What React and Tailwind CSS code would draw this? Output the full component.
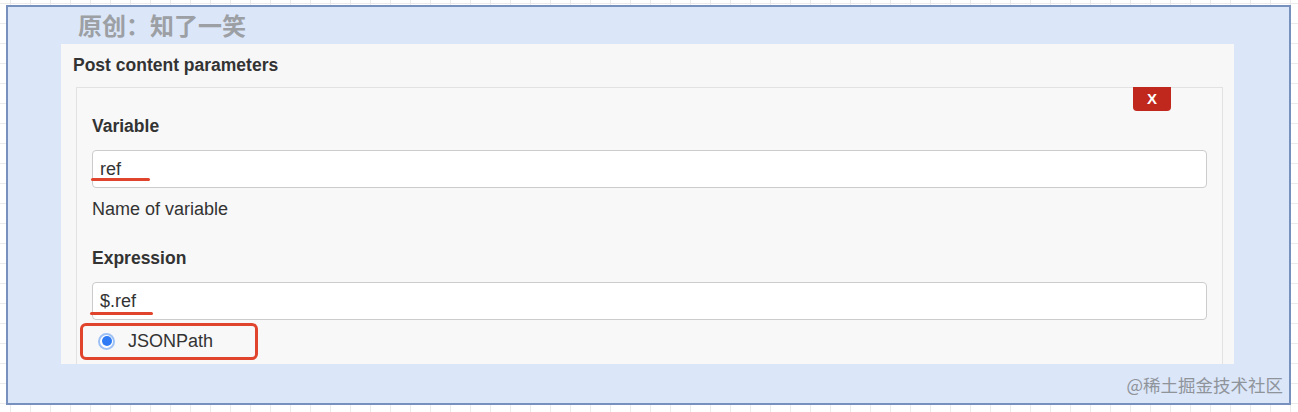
import React from 'react';

const sans = { fontFamily: "'Liberation Sans', Arial, 'Noto Sans CJK SC', sans-serif" };
const cjk = { fontFamily: "'Noto Sans CJK SC', 'Liberation Sans', sans-serif" };

// Red hand-drawn style underline used as annotation
const Mark = ({ className }) => (
  <span className={`absolute h-[3px] rounded-full bg-[#e0442c] ${className}`}></span>
);

const Field = ({ value, markClass }) => (
  <div className="relative h-[38px] w-full rounded-[4px] border border-[#cccccc] bg-white pl-[7px] flex items-center text-[18px] leading-[24px] text-[#333]">
    <span>{value}</span>
    <Mark className={markClass} />
  </div>
);

export default function App() {
  return (
    <div
      className="h-[412px] w-full overflow-hidden bg-white bg-[linear-gradient(to_right,#ebebeb_1px,transparent_1px),linear-gradient(to_bottom,#ebebeb_1px,transparent_1px)] bg-[size:20px_20px] bg-[position:10px_3px] pt-[5px] pl-[6px]"
      style={sans}
    >
      <div className="relative h-[400px] w-[1285px] border-2 border-[#7790bd] bg-[#dbe6f8]">
        {/* Header */}
        <div className="h-[37px] pl-[70px] pt-[2px] text-[24px] leading-[32px] font-bold text-[#9c9fa4]" style={cjk}>
          原创：知了一笑
        </div>

        {/* Panel */}
        <div className="ml-[53px] h-[320px] w-[1173px] overflow-hidden bg-[#f7f7f7] pt-[9px] pl-[12px]">
          <h2 className="text-[17.5px] leading-[24px] font-bold text-[#333]">Post content parameters</h2>

          <div className="relative mt-[10px] ml-[3px] h-[300px] w-[1147px] border border-[#e2e2e2] bg-[#f8f8f8] px-[15px] pt-[26px]">
            <button className="absolute right-[51px] top-[-1px] flex h-[24px] w-[38px] items-center justify-center rounded-b-[4px] bg-[#c1281d] text-[15px] font-bold text-white">
              X
            </button>

            {/* Variable */}
            <div className="text-[17.5px] leading-[24px] font-bold text-[#333]">Variable</div>
            <div className="mt-[12px]">
              <Field value="ref" markClass="left-[-2px] top-[27px] w-[59px]" />
            </div>
            <div className="mt-[9px] text-[18px] leading-[24px] text-[#333]">Name of variable</div>

            {/* Expression */}
            <div className="mt-[25px] text-[17.5px] leading-[24px] font-bold text-[#333]">Expression</div>
            <div className="mt-[12px]">
              <Field value="$.ref" markClass="left-[-3px] top-[29px] w-[63px]" />
            </div>

            <div className="mt-[3px] -ml-[12px] inline-flex items-center rounded-[6px] border-[3px] border-[#e0442c] pl-[15px] pr-[42px] pt-[3px] pb-[4px]">
              <span className="flex h-[17px] w-[17px] items-center justify-center rounded-full border-2 border-[#9dc0f5] bg-white">
                <span className="h-[10px] w-[10px] rounded-full bg-[#2f7af5]"></span>
              </span>
              <span className="ml-[13px] text-[18px] leading-[24px] text-[#333]">JSONPath</span>
            </div>
          </div>
        </div>

        {/* Watermark */}
        <div className="absolute right-[6px] bottom-[6px] text-[17.5px] leading-[24px] text-[#8f949b]" style={cjk}>
          @稀土掘金技术社区
        </div>
      </div>
    </div>
  );
}
